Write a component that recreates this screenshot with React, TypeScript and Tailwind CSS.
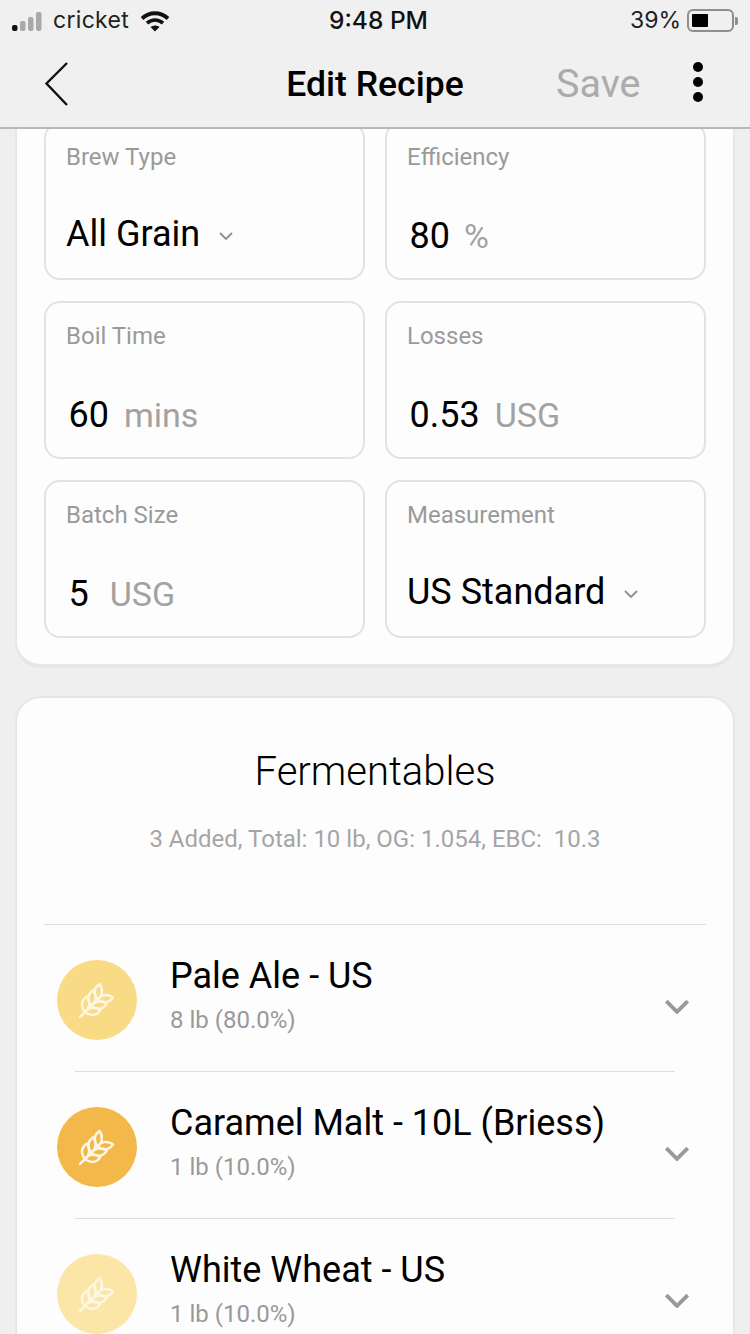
const Chevron = ({ cls }: { cls: string }) => (
  <svg viewBox="0 0 24 14" className={cls} fill="none" stroke="currentColor" strokeWidth="3.6">
    <path d="M2 2l10 10L22 2" />
  </svg>
);

const SmallChevron = () => (
  <svg viewBox="0 0 14 9" className="w-[14px] h-[9px] text-[#8e8e8e]" fill="none" stroke="currentColor" strokeWidth="1.8">
    <path d="M1 1l6 6 6-6" />
  </svg>
);

const leaf = (y: number) =>
  `M15 ${y}C8.5 ${y - 1.5} 6 ${y - 5.5} 7 ${y - 10.5}C12.5 ${y - 9.5} 16 ${y - 5} 15 ${y}ZM15 ${y}C21.5 ${y - 1.5} 24 ${y - 5.5} 23 ${y - 10.5}C17.5 ${y - 9.5} 14 ${y - 5} 15 ${y}Z`;

const WheatIcon = () => (
  <svg width="36" height="36" viewBox="0 0 30 30" fill="none" stroke="#fdf6e3" strokeWidth="2" strokeLinecap="round" strokeLinejoin="round" className="overflow-visible">
    <g transform="rotate(45 15 15)">
      <path d="M15 35V28" />
      <path d={leaf(29.5)} />
      <path d={leaf(22)} />
      <path d={leaf(14.5)} />
    </g>
  </svg>
);

function InputField({ label, value, unit, gap }: { label: string; value: string; unit: string; gap: string }) {
  return (
    <div className="h-[158px] rounded-[16px] border-2 border-[#e2e2e2] bg-[#fdfdfd] px-[20px] pt-[17px] flex flex-col">
      <div className="text-[24px] leading-[32px] text-[#9a9a9a]">{label}</div>
      <div className="mt-[41px] pl-[2.5px] flex items-baseline text-[36px] leading-[44px]">
        <span className="text-black">{value}</span>
        <span className={`${gap} text-[#a2a2a2] text-[34px]`}>{unit}</span>
      </div>
    </div>
  );
}

function SelectField({ label, value }: { label: string; value: string }) {
  return (
    <div className="h-[158px] rounded-[16px] border-2 border-[#e2e2e2] bg-[#fdfdfd] px-[20px] pt-[17px] flex flex-col">
      <div className="text-[24px] leading-[32px] text-[#9a9a9a]">{label}</div>
      <div className="mt-[39px] flex items-center text-[36px] leading-[44px] text-black">
        <span>{value}</span>
        <span className="ml-[19px] mt-[4px] flex"><SmallChevron /></span>
      </div>
    </div>
  );
}

function Row({ name, sub, color, last }: { name: string; sub: string; color: string; last?: boolean }) {
  return (
    <div className="h-[147px] relative flex items-center pl-[13px] pr-[16px]">
      <div className={`w-[80px] h-[80px] mt-[2px] rounded-full flex items-center justify-center shrink-0 ${color}`}>
        <WheatIcon />
      </div>
      <div className="ml-[33px] flex-1 mb-[8px]">
        <div className="text-[36px] leading-[44px] text-black">{name}</div>
        <div className="text-[24px] leading-[30px] text-[#999999] mt-[7px]">{sub}</div>
      </div>
      <Chevron cls="w-[26px] h-[15px] text-[#999999] mt-[16px]" />
      {!last && <div className="absolute bottom-0 left-[31px] right-[31px] h-[1px] bg-[#dddddd]" />}
    </div>
  );
}

export default function App() {
  return (
    <div className="w-[750px] h-[1334px] overflow-hidden bg-[#efefef] flex flex-col" style={{ fontFamily: "Roboto, sans-serif" }}>
      <header className="h-[129px] shrink-0 bg-[#f0f0f0] border-b-2 border-[#b8b8b8] relative z-10">
        <div className="h-[41px] relative flex items-center justify-between pl-[12px] pr-[12px]" style={{ fontFamily: "Inter, sans-serif" }}>
          <div className="flex items-center">
            <svg width="34" height="20" viewBox="0 0 34 20">
              <rect x="0" y="14" width="5.5" height="6" rx="2" fill="#111" />
              <rect x="8" y="10" width="5.5" height="10" rx="2" fill="#a9a9a9" />
              <rect x="16" y="6" width="5.5" height="14" rx="2" fill="#a9a9a9" />
              <rect x="24" y="1" width="5.5" height="19" rx="2" fill="#a9a9a9" />
            </svg>
            <span className="text-[23px] text-[#222] ml-[7px] tracking-[0.3px]">cricket</span>
            <svg width="30" height="22" viewBox="0 0 30 22" className="ml-[11px]" fill="none" stroke="#111">
              <path d="M2 8.5C9.5 1.5 20.5 1.5 28 8.5" strokeWidth="3.8" />
              <path d="M7 13.2C11.8 9 18.2 9 23 13.2" strokeWidth="3.6" />
              <path d="M10.5 17 L15 21.5 L19.5 17 C16.7 15 13.3 15 10.5 17Z" fill="#111" stroke="none" />
            </svg>
          </div>
          <span className="absolute left-[329px] text-[24.5px] font-medium text-[#111]">9:48 PM</span>
          <div className="flex items-center">
            <span className="text-[23px] text-[#222] ml-[1px]">39%</span>
            <div className="ml-[6px] w-[47px] h-[23px] rounded-[6px] border-2 border-[#8e8e8e] p-[3px] flex">
              <div className="w-[16px] bg-black rounded-[1px]" />
            </div>
            <div className="w-[3px] h-[8px] bg-[#8e8e8e] rounded-r-[2px] ml-[1px]" />
          </div>
        </div>
        <div className="h-[86px] relative flex items-center justify-center">
          <svg width="26" height="46" viewBox="0 0 26 46" className="absolute left-[44px] top-[20px]" fill="none" stroke="#111" strokeWidth="2.4">
            <path d="M23 2 L2.5 22.5 L23 44" />
          </svg>
          <span className="text-[35.5px] font-medium text-black leading-[44px]">Edit Recipe</span>
          <span className="absolute left-[556px] top-[21px] text-[39.5px] leading-[44px] text-[#ababab]">Save</span>
          <div className="absolute left-[693px] top-[21px] flex flex-col gap-[5px]">
            <div className="w-[10px] h-[10px] rounded-full bg-black" />
            <div className="w-[10px] h-[10px] rounded-full bg-black" />
            <div className="w-[10px] h-[10px] rounded-full bg-black" />
          </div>
        </div>
      </header>

      <main className="flex-1 min-h-0 overflow-hidden px-[15px]">
        <section className="-mt-[37px] rounded-[26px] bg-[#fdfdfd] border-2 border-t-0 border-[#e6e6e6] border-b-[4px] px-[27px] pb-[26px] pt-[30px] w-[720px]">
          <div className="grid grid-cols-[321px_321px] gap-x-[20px] gap-y-[21px]">
            <SelectField label="Brew Type" value="All Grain" />
            <InputField label="Efficiency" value="80" unit="%" gap="ml-[14px]" />
            <InputField label="Boil Time" value="60" unit="mins" gap="ml-[15px]" />
            <InputField label="Losses" value="0.53" unit="USG" gap="ml-[15px]" />
            <InputField label="Batch Size" value="5" unit="USG" gap="ml-[21px]" />
            <SelectField label="Measurement" value="US Standard" />
          </div>
        </section>

        <section className="mt-[28px] rounded-[26px] bg-[#fdfdfd] border-2 border-[#e6e6e6] px-[27px] w-[720px]">
          <h2 className="text-center text-[40px] leading-[48px] font-light text-black mt-[50px]">Fermentables</h2>
          <p className="text-center text-[24px] leading-[30px] text-[#a5a5a5] mt-[28px]">3 Added, Total: 10 lb, OG: 1.054, EBC:&nbsp; 10.3</p>
          <div className="mt-[70px] h-[1px] bg-[#dddddd]" />
          <Row name="Pale Ale - US" sub="8 lb (80.0%)" color="bg-[#f9da85]" />
          <Row name="Caramel Malt - 10L (Briess)" sub="1 lb (10.0%)" color="bg-[#f2b84a]" />
          <Row name="White Wheat - US" sub="1 lb (10.0%)" color="bg-[#fbe5a7]" last />
        </section>
      </main>
    </div>
  );
}
